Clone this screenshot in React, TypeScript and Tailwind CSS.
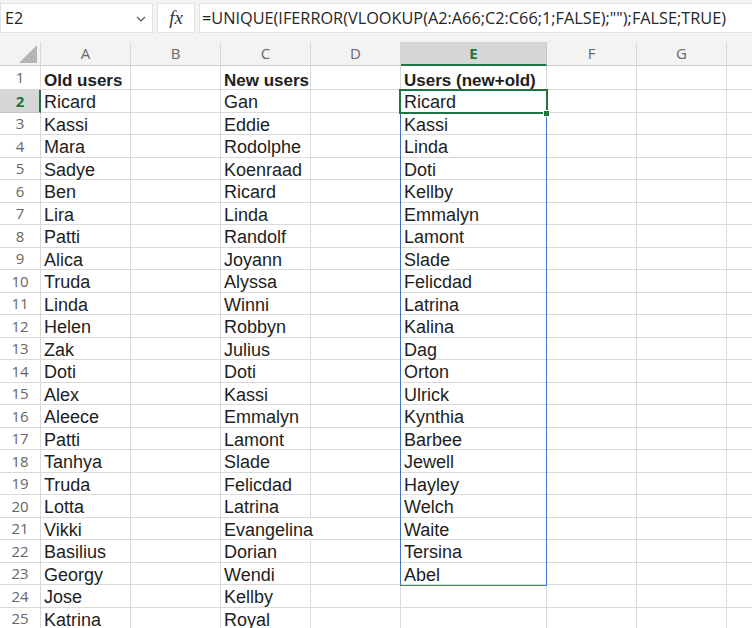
import React from "react";

const colA = ["Old users","Ricard","Kassi","Mara","Sadye","Ben","Lira","Patti","Alica","Truda","Linda","Helen","Zak","Doti","Alex","Aleece","Patti","Tanhya","Truda","Lotta","Vikki","Basilius","Georgy","Jose","Katrina"];
const colC = ["New users","Gan","Eddie","Rodolphe","Koenraad","Ricard","Linda","Randolf","Joyann","Alyssa","Winni","Robbyn","Julius","Doti","Kassi","Emmalyn","Lamont","Slade","Felicdad","Latrina","Evangelina","Dorian","Wendi","Kellby","Royal"];
const colE = ["Users (new+old)","Ricard","Kassi","Linda","Doti","Kellby","Emmalyn","Lamont","Slade","Felicdad","Latrina","Kalina","Dag","Orton","Ulrick","Kynthia","Barbee","Jewell","Hayley","Welch","Waite","Tersina","Abel","",""];

const uiFont = { fontFamily: '"Open Sans", "Noto Sans", sans-serif' };
const cellFont = { fontFamily: '"Liberation Sans", Arial, sans-serif' };

function Cell({ w, text, bold, noRight }: { w: string; text: string; bold: boolean; noRight?: boolean }) {
  return (
    <div
      className={`${w} shrink-0 h-full border-b border-[#dadada] ${noRight ? "border-r border-r-transparent" : "border-r border-r-[#dadada]"} whitespace-nowrap overflow-visible pl-[3px] text-[#1e1e1e] ${
        bold ? "font-bold text-[17px] leading-[19px] pt-[5px]" : "text-[18px] leading-[20px] pt-[2px]"
      }`}
      style={cellFont}
    >
      {text}
    </div>
  );
}

export default function App() {
  const rows = colA.map((a, i) => ({ n: i + 1, a, c: colC[i], e: colE[i] }));
  return (
    <div className="relative w-[752px] h-[628px] overflow-hidden bg-white">
      {/* formula bar */}
      <div className="h-[36px] bg-[#f3f3f3] flex items-start pt-[3px] gap-[4px]" style={uiFont}>
        <div className="w-[153px] h-[30px] bg-white border border-[#e1e1e1] flex items-center justify-between pl-[4px] pr-[6px] text-[16px] text-[#262626]">
          <span>E2</span>
          <svg width="10" height="6" viewBox="0 0 10 6" className="mt-[1px]">
            <path d="M1 1 L5 5 L9 1" fill="none" stroke="#555" strokeWidth="1.2" />
          </svg>
        </div>
        <div className="w-[38px] h-[30px] bg-white border border-[#e1e1e1] flex items-center justify-center">
          <span className="italic text-[19px] text-[#333]" style={{ fontFamily: '"Liberation Serif", serif' }}>fx</span>
        </div>
        <div className="flex-1 h-[30px] bg-white border border-[#e1e1e1] border-r-0 flex items-center pl-[2px] pt-[1px] text-[16.3px] text-[#262626] whitespace-nowrap overflow-hidden">
          =UNIQUE(IFERROR(VLOOKUP(A2:A66;C2:C66;1;FALSE);"");FALSE;TRUE)
        </div>
      </div>
      <div className="h-[6px] bg-[#f3f3f3]" />
      {/* column headers */}
      <div className="flex h-[24px] bg-[#f3f3f3] border-b border-[#d0d0d0] text-[15px] text-[#666]" style={uiFont}>
        <div className="w-[41px] shrink-0 h-full border-r border-[#d9d9d9] relative flex items-end justify-end pr-[3px] pb-[2px]">
          <svg width="18" height="18" viewBox="0 0 18 18">
            <polygon points="18,0 18,18 0,18" fill="#b5b5b5" />
          </svg>
        </div>
        {["A", "B", "C", "D"].map((l) => (
          <div key={l} className="w-[90px] shrink-0 h-full border-r border-[#d9d9d9] flex items-center justify-center">{l}</div>
        ))}
        <div className="w-[146px] shrink-0 h-[24px] bg-[#d6d6d6] border-r border-[#c6c6c6] border-b-2 border-b-[#217346] flex items-center justify-center font-bold text-[#217346]">E</div>
        {["F", "G"].map((l) => (
          <div key={l} className="w-[90px] shrink-0 h-full border-r border-[#d9d9d9] flex items-center justify-center">{l}</div>
        ))}
        <div className="flex-1 h-full" />
      </div>
      {/* rows */}
      {rows.map((r) => {
        const bold = r.n === 1;
        const sel = r.n === 2;
        return (
          <div key={r.n} className={`flex ${bold ? "h-[24px]" : "h-[22.5px]"}`}>
            <div
              className={`w-[41px] shrink-0 h-full border-b flex items-center justify-center text-[15px] ${
                sel
                  ? "bg-[#d6d6d6] border-b-[#c6c6c6] border-r-2 border-r-[#217346] font-bold text-[#217346] pl-[1px]"
                  : "bg-white border-b-[#dadada] border-r border-r-[#d9d9d9] text-[#666]"
              }`}
              style={uiFont}
            >
              {r.n}
            </div>
            <Cell w="w-[90px]" text={r.a} bold={bold} />
            <Cell w="w-[90px]" text="" bold={bold} />
            <Cell w="w-[90px]" text={r.c} bold={bold} noRight={r.c === "Evangelina"} />
            <Cell w="w-[90px]" text="" bold={bold} />
            <Cell w="w-[146px]" text={r.e} bold={bold} />
            <Cell w="w-[90px]" text="" bold={bold} />
            <Cell w="w-[90px]" text="" bold={bold} />
            <div className="flex-1 h-full border-b border-[#dadada]" />
          </div>
        );
      })}
      {/* spill range outline */}
      <div className="absolute left-[400px] top-[89px] w-[147px] h-[497px] border border-[#4472c4] pointer-events-none" />
      {/* active cell */}
      <div className="absolute left-[399px] top-[89px] w-[149px] h-[25px] border-2 border-[#217346] pointer-events-none" />
      <div className="absolute left-[543px] top-[110px] w-[7px] h-[7px] bg-[#217346] border border-white pointer-events-none" />
    </div>
  );
}
